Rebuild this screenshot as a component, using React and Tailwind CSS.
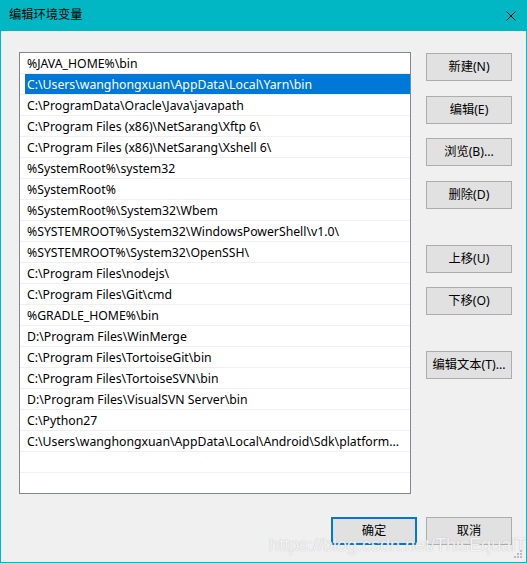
import React from 'react';

const paths = [
  '%JAVA_HOME%\\bin',
  'C:\\Users\\wanghongxuan\\AppData\\Local\\Yarn\\bin',
  'C:\\ProgramData\\Oracle\\Java\\javapath',
  'C:\\Program Files (x86)\\NetSarang\\Xftp 6\\',
  'C:\\Program Files (x86)\\NetSarang\\Xshell 6\\',
  '%SystemRoot%\\system32',
  '%SystemRoot%',
  '%SystemRoot%\\System32\\Wbem',
  '%SYSTEMROOT%\\System32\\WindowsPowerShell\\v1.0\\',
  '%SYSTEMROOT%\\System32\\OpenSSH\\',
  'C:\\Program Files\\nodejs\\',
  'C:\\Program Files\\Git\\cmd',
  '%GRADLE_HOME%\\bin',
  'D:\\Program Files\\WinMerge',
  'C:\\Program Files\\TortoiseGit\\bin',
  'C:\\Program Files\\TortoiseSVN\\bin',
  'D:\\Program Files\\VisualSVN Server\\bin',
  'C:\\Python27',
  'C:\\Users\\wanghongxuan\\AppData\\Local\\Android\\Sdk\\platform...',
  '',
  '',
];

const sideButtons = [
  { label: '新建(N)', mt: 'mt-[1px]' },
  { label: '编辑(E)', mt: 'mt-[15px]' },
  { label: '浏览(B)...', mt: 'mt-[14px]' },
  { label: '删除(D)', mt: 'mt-[15px]' },
  { label: '上移(U)', mt: 'mt-[36px]' },
  { label: '下移(O)', mt: 'mt-[14px]' },
  { label: '编辑文本(T)...', mt: 'mt-[36px]' },
];

const Button = ({ children, className = '', primary = false }) => (
  <button
    className={`h-[28px] w-[86px] bg-[#e1e1e1] text-[12.25px] text-black flex items-center justify-center ${
      primary ? 'border-2 border-[#0078d7]' : 'border border-[#adadad]'
    } ${className}`}
  >
    {children}
  </button>
);

const Grip = () => (
  <svg width="8" height="8" viewBox="0 0 8 8" className="absolute right-[4px] bottom-[4px]">
    <rect x="6" y="0" width="2" height="2" fill="#bcbcbc" />
    <rect x="3" y="3" width="2" height="2" fill="#bcbcbc" />
    <rect x="6" y="3" width="2" height="2" fill="#bcbcbc" />
    <rect x="0" y="6" width="2" height="2" fill="#bcbcbc" />
    <rect x="3" y="6" width="2" height="2" fill="#bcbcbc" />
    <rect x="6" y="6" width="2" height="2" fill="#bcbcbc" />
  </svg>
);

export default function App() {
  return (
    <div
      className="relative w-[527px] h-[563px] bg-[#f0f0f0] border-x border-b border-[#00b7c3] flex flex-col overflow-hidden"
      style={{ fontFamily: '"Noto Sans", "Noto Sans CJK SC", sans-serif' }}
    >
      {/* title bar */}
      <div className="h-[31px] bg-[#00b7c3] flex items-center justify-between pl-[8px] pr-[10px] shrink-0">
        <span className="text-[12.25px] text-black">编辑环境变量</span>
        <svg width="10" height="10" viewBox="0 0 10 10">
          <path d="M0.5 0.5 L9.5 9.5 M9.5 0.5 L0.5 9.5" stroke="#000" strokeWidth="1" />
        </svg>
      </div>

      <div className="flex pl-[18px] pt-[21px]">
        {/* list */}
        <div className="w-[392px] h-[442px] bg-white border border-[#828790] overflow-hidden">
          {paths.map((p, i) => (
            <div key={i} className="h-[21px] border-b border-[#f0f0f0] flex">
              <div
                className={`ml-[5px] flex-1 flex items-center pl-[2px] pt-[2px] text-[12.25px] whitespace-nowrap ${
                  i === 1 ? 'bg-[#0078d7] text-white' : 'text-black'
                }`}
              >
                {p}
              </div>
            </div>
          ))}
        </div>

        {/* side buttons */}
        <div className="ml-[15px] flex flex-col">
          {sideButtons.map((b) => (
            <Button key={b.label} className={b.mt}>
              {b.label}
            </Button>
          ))}
        </div>
      </div>

      {/* bottom buttons */}
      <div className="flex justify-end gap-[9px] pr-[14px] pt-[23px]">
        <Button primary>确定</Button>
        <Button>取消</Button>
      </div>

      {/* watermark */}
      <div className="absolute left-[268px] top-[532px] text-[18px] text-white/85 [text-shadow:0_0_1px_rgba(110,110,110,0.55)] font-['Liberation_Sans',sans-serif] pointer-events-none whitespace-nowrap">
        https://blog.csdn.net/ThisEqualThis
      </div>

      <Grip />
    </div>
  );
}
